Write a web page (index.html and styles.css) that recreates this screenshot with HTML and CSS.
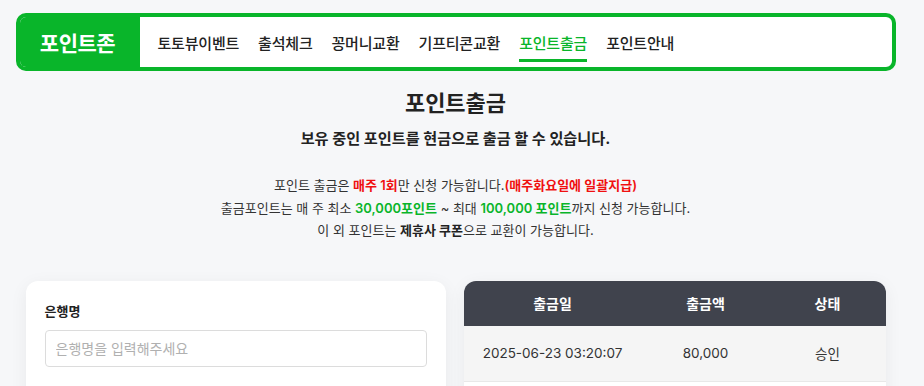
FILE: index.html
```html
<!DOCTYPE html>
<html lang="ko">
<head>
  <meta charset="UTF-8">
  <meta name="viewport" content="width=device-width, initial-scale=1.0">
  <title>포인트출금</title>
  <link rel="stylesheet" href="styles.css">
</head>
<body>
  <div class="page">
    <div class="topbar">
      <div class="logo">포인트존</div>
      <nav class="menu">
        <a href="#" class="menu-item">토토뷰이벤트</a>
        <a href="#" class="menu-item">출석체크</a>
        <a href="#" class="menu-item">꽁머니교환</a>
        <a href="#" class="menu-item">기프티콘교환</a>
        <a href="#" class="menu-item active">포인트출금</a>
        <a href="#" class="menu-item">포인트안내</a>
      </nav>
    </div>

    <div class="intro">
      <h1 class="title">포인트출금</h1>
      <p class="subtitle">보유 중인 포인트를 현금으로 출금 할 수 있습니다.</p>
      <div class="notice">
        <p>포인트 출금은 <span class="red">매주 1회</span>만 신청 가능합니다.<span class="red">(매주화요일에 일괄지급)</span></p>
        <p>출금포인트는 매 주 최소 <span class="green">30,000포인트</span> ~ 최대 <span class="green">100,000 포인트</span>까지 신청 가능합니다.</p>
        <p>이 외 포인트는 <b>제휴사 쿠폰</b>으로 교환이 가능합니다.</p>
      </div>
    </div>

    <div class="panels">
      <div class="card form-card">
        <label class="field-label" for="bank">은행명</label>
        <input id="bank" class="field-input" type="text" placeholder="은행명을 입력해주세요">
      </div>
      <div class="card table-card">
        <table class="history">
          <thead>
            <tr>
              <th class="col-date">출금일</th>
              <th class="col-amount">출금액</th>
              <th class="col-status">상태</th>
            </tr>
          </thead>
          <tbody>
            <tr>
              <td>2025-06-23 03:20:07</td>
              <td>80,000</td>
              <td>승인</td>
            </tr>
            <tr>
              <td>&nbsp;</td>
              <td></td>
              <td></td>
            </tr>
          </tbody>
        </table>
      </div>
    </div>
  </div>
</body>
</html>
```

FILE: styles.css
```css
body {
  margin: 0;
  padding: 0;
  background-color: #f6f7f9;
  font-family: Inter, "Noto Sans CJK KR", sans-serif;
  color: #222;
  overflow: hidden;
}

.page {
  width: 911px;
  height: 386px;
  overflow: hidden;
}

.topbar {
  display: flex;
  width: 880px;
  height: 58px;
  margin: 13px auto 0;
  box-sizing: border-box;
  border: 4px solid #09b52a;
  border-radius: 10px;
  background-color: #fff;
  overflow: hidden;
}

.logo {
  width: 124px;
  margin: -4px 0 -4px -4px;
  background-color: #09b52a;
  color: #fff;
  font-size: 21px;
  font-weight: 700;
  display: flex;
  align-items: center;
  justify-content: center;
  letter-spacing: -0.5px;
}

.menu {
  display: flex;
  align-items: center;
  gap: 19px;
  padding-left: 18px;
}

.menu-item {
  position: relative;
  font-size: 15px;
  font-weight: 500;
  color: #222;
  text-decoration: none;
  letter-spacing: -0.2px;
}

.menu-item.active {
  color: #09b52a;
}

.menu-item.active::after {
  content: "";
  position: absolute;
  left: 0;
  right: 0;
  bottom: -9px;
  height: 3px;
  background-color: #09b52a;
}

.intro {
  text-align: center;
  padding-top: 17px;
}

.title {
  margin: 0;
  font-size: 22px;
  font-weight: 700;
  line-height: 31px;
}

.subtitle {
  margin: 9px 0 0;
  font-size: 15.2px;
  font-weight: 700;
  line-height: 22px;
}

.notice {
  margin-top: 24px;
  font-size: 13px;
  color: #333;
  line-height: 22.5px;
}

.notice p {
  margin: 0;
}

.notice b {
  font-weight: 700;
  color: #222;
}

.red {
  color: #f01010;
  font-weight: 600;
}

.green {
  color: #09b52a;
  font-weight: 600;
}

.panels {
  display: grid;
  grid-template-columns: 420px 422px;
  gap: 18px;
  width: 860px;
  margin: 39px auto 0;
}

.card {
  background-color: #fff;
  border-radius: 12px;
  box-shadow: 0 4px 18px rgba(0, 0, 0, 0.06);
  height: 140px;
  overflow: hidden;
}

.form-card {
  padding: 20px 19px;
  box-sizing: border-box;
}

.field-label {
  display: block;
  font-size: 13px;
  font-weight: 600;
  line-height: 18px;
  margin-top: 1px;
}

.field-input {
  display: block;
  width: 100%;
  height: 37px;
  margin-top: 10px;
  box-sizing: border-box;
  border: 1px solid #dcdcdc;
  border-radius: 4px;
  padding: 0 10px;
  font-family: Inter, "Noto Sans CJK KR", sans-serif;
  font-size: 14px;
}

.field-input::placeholder {
  color: #b0b0b0;
}

.history {
  width: 100%;
  border-collapse: collapse;
  font-size: 13.5px;
  table-layout: fixed;
}

.history th {
  height: 45px;
  background-color: #40434d;
  color: #fff;
  font-size: 14px;
  font-weight: 700;
  padding: 0;
}

.history td {
  height: 55px;
  text-align: center;
  color: #333;
  padding: 0;
  border-bottom: 1px solid #e8e8e8;
}

.history tbody tr:first-child td {
  background-color: #f5f5f5;
}

.col-date {
  width: 178px;
}

.col-amount {
  width: 128px;
}
```
